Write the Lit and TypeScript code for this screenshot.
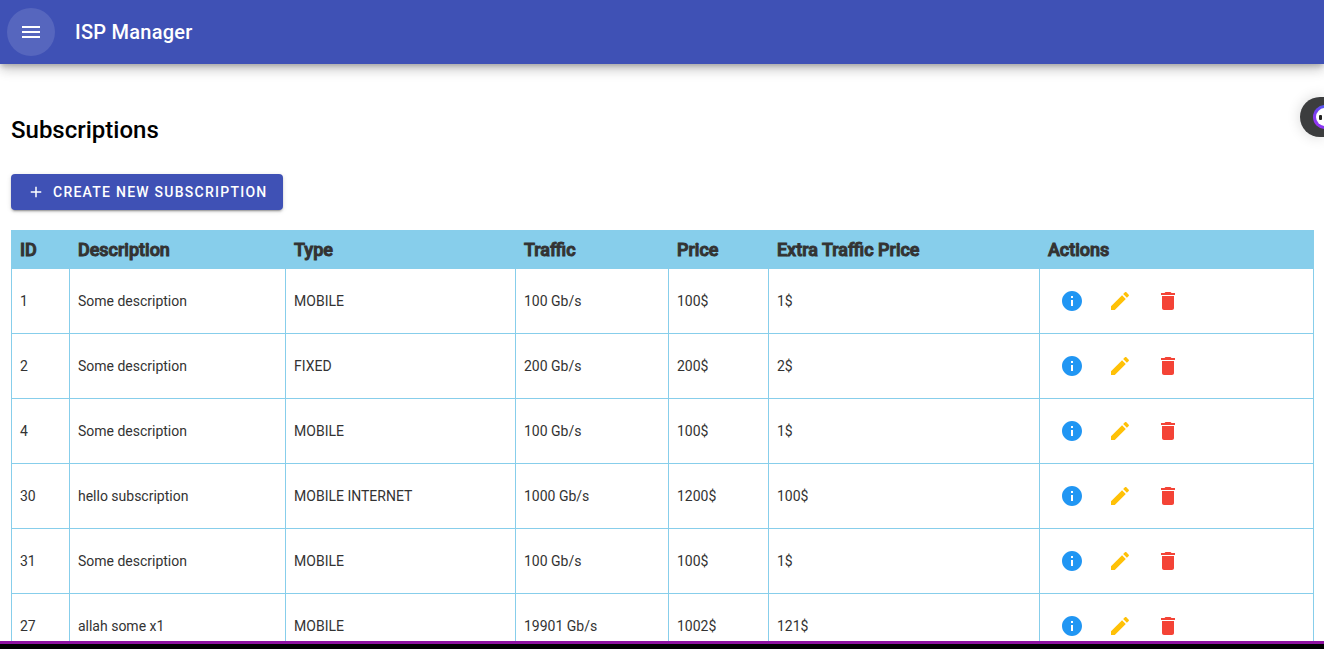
import { LitElement, html, css, svg } from "lit";
import { customElement, state } from "lit/decorators.js";

interface Subscription {
  id: number;
  description: string;
  type: string;
  traffic: number;
  price: number;
  extraPrice: number;
}

const PATHS = {
  menu: "M3 18h18v-2H3v2zm0-5h18v-2H3v2zm0-7v2h18V6H3z",
  add: "M19 13h-6v6h-2v-6H5v-2h6V5h2v6h6v2z",
  info: "M12 2C6.48 2 2 6.48 2 12s4.48 10 10 10 10-4.48 10-10S17.52 2 12 2zm1 15h-2v-6h2v6zm0-8h-2V7h2v2z",
  edit: "M3 17.25V21h3.75L17.81 9.94l-3.75-3.75L3 17.25zM20.71 7.04c.39-.39.39-1.02 0-1.41l-2.34-2.34c-.39-.39-1.02-.39-1.41 0l-1.83 1.83 3.75 3.75 1.83-1.83z",
  delete: "M6 19c0 1.1.9 2 2 2h8c1.1 0 2-.9 2-2V7H6v12zM19 4h-3.5l-1-1h-5l-1 1H5v2h14V4z",
};

const icon = (name: keyof typeof PATHS, size = 24) => html`
  <svg width=${size} height=${size} viewBox="0 0 24 24" aria-hidden="true">
    ${svg`<path fill="currentColor" d=${PATHS[name]}></path>`}
  </svg>
`;

@customElement("app-bar")
export class AppBar extends LitElement {
  static styles = css`
    :host {
      display: block;
      position: relative;
      z-index: 1;
    }
    .bar {
      display: flex;
      align-items: center;
      gap: 20px;
      height: 64px;
      padding: 0 7px;
      background: #3f51b5;
      color: #fff;
      box-shadow: 0 3px 5px -1px rgba(0, 0, 0, 0.2),
        0 6px 10px 0 rgba(0, 0, 0, 0.14), 0 1px 18px 0 rgba(0, 0, 0, 0.12);
    }
    .menu {
      display: grid;
      place-items: center;
      width: 48px;
      height: 48px;
      padding: 0;
      border: 0;
      border-radius: 50%;
      background: rgba(255, 255, 255, 0.12);
      color: inherit;
      cursor: pointer;
    }
    .title {
      font-size: 20px;
      font-weight: 500;
      line-height: 32px;
      letter-spacing: 0.0125em;
    }
  `;

  render() {
    return html`
      <header class="bar">
        <button class="menu" aria-label="Menu">${icon("menu")}</button>
        <span class="title">ISP Manager</span>
      </header>
    `;
  }
}

@customElement("subscription-table")
export class SubscriptionTable extends LitElement {
  static properties = { rows: { attribute: false } };

  declare rows: Subscription[];

  static styles = css`
    :host {
      display: block;
    }
    .table {
      width: 100%;
      table-layout: fixed;
      border-collapse: collapse;
      color: #333;
      font-size: 14px;
      line-height: 20px;
    }
    .table th,
    .table td {
      box-sizing: border-box;
      padding: 8px;
      border: 1px solid #87ceeb;
      text-align: left;
    }
    .table th {
      background: #87ceeb;
      font-size: 18px;
      font-weight: 500;
      line-height: 21px;
      -webkit-text-stroke: 1px #333;
    }
    .id {
      width: 4.45%;
    }
    .description {
      width: 16.6%;
    }
    .type {
      width: 17.66%;
    }
    .traffic {
      width: 11.75%;
    }
    .price {
      width: 7.68%;
    }
    .extra {
      width: 20.81%;
    }
    .actions {
      display: flex;
    }
    .action {
      display: grid;
      place-items: center;
      width: 48px;
      height: 48px;
      padding: 0;
      border: 0;
      background: none;
      cursor: pointer;
    }
    .info {
      color: #2196f3;
    }
    .edit {
      color: #ffc107;
    }
    .delete {
      color: #f44336;
    }
  `;

  render() {
    return html`
      <table class="table">
        <thead>
          <tr>
            <th class="id" scope="col">ID</th>
            <th class="description" scope="col">Description</th>
            <th class="type" scope="col">Type</th>
            <th class="traffic" scope="col">Traffic</th>
            <th class="price" scope="col">Price</th>
            <th class="extra" scope="col">Extra Traffic Price</th>
            <th scope="col">Actions</th>
          </tr>
        </thead>
        <tbody>
          ${this.rows.map(
            (row) => html`
              <tr>
                <td>${row.id}</td>
                <td>${row.description}</td>
                <td>${row.type}</td>
                <td>${row.traffic} Gb/s</td>
                <td>${row.price}$</td>
                <td>${row.extraPrice}$</td>
                <td>
                  <div class="actions">
                    <button class="action info" aria-label="Details">${icon("info")}</button>
                    <button class="action edit" aria-label="Edit">${icon("edit")}</button>
                    <button class="action delete" aria-label="Delete">${icon("delete")}</button>
                  </div>
                </td>
              </tr>
            `
          )}
        </tbody>
      </table>
    `;
  }
}

@customElement("assistant-tab")
export class AssistantTab extends LitElement {
  static styles = css`
    :host {
      position: fixed;
      top: 97px;
      right: 0;
      z-index: 2;
    }
    .tab {
      display: flex;
      align-items: center;
      justify-content: flex-end;
      width: 24px;
      height: 40px;
      padding: 0;
      border: 0;
      border-radius: 20px 0 0 20px;
      background: #3c3d3e;
      box-shadow: 0 0 14px rgba(0, 0, 0, 0.16);
      cursor: pointer;
    }
  `;

  render() {
    return html`
      <button class="tab" aria-label="Assistant">
        <svg width="11" height="24" viewBox="0 0 11 24" aria-hidden="true">
          <defs>
            <linearGradient id="ring" x1="0" y1="1" x2="1" y2="0">
              <stop offset="0" stop-color="#a92bf5"></stop>
              <stop offset="0.5" stop-color="#6a45f0"></stop>
              <stop offset="1" stop-color="#3d7bff"></stop>
            </linearGradient>
          </defs>
          <circle cx="12" cy="12" r="12" fill="url(#ring)"></circle>
          <circle cx="12" cy="12" r="9" fill="#fff"></circle>
          <rect x="6" y="10" width="3" height="5" rx="1" fill="#222"></rect>
        </svg>
      </button>
    `;
  }
}

@customElement("app-root")
export class AppRoot extends LitElement {
  @state()
  private rows: Subscription[] = [
    { id: 1, description: "Some description", type: "MOBILE", traffic: 100, price: 100, extraPrice: 1 },
    { id: 2, description: "Some description", type: "FIXED", traffic: 200, price: 200, extraPrice: 2 },
    { id: 4, description: "Some description", type: "MOBILE", traffic: 100, price: 100, extraPrice: 1 },
    { id: 30, description: "hello subscription", type: "MOBILE INTERNET", traffic: 1000, price: 1200, extraPrice: 100 },
    { id: 31, description: "Some description", type: "MOBILE", traffic: 100, price: 100, extraPrice: 1 },
    { id: 27, description: "allah some x1", type: "MOBILE", traffic: 19901, price: 1002, extraPrice: 121 },
  ];

  static styles = css`
    :host {
      display: flex;
      flex-direction: column;
      height: 100vh;
      background: #fff;
      color: #000;
      font-family: Roboto, sans-serif;
      -webkit-font-smoothing: antialiased;
    }
    .content {
      flex: 1;
      min-height: 0;
      overflow: hidden;
      padding: 50px 10px 0 11px;
    }
    .heading {
      margin: 0 0 28px;
      font-size: 24px;
      font-weight: 500;
      line-height: 32px;
    }
    .create {
      display: flex;
      align-items: center;
      gap: 8px;
      height: 36px;
      margin: 0 0 20px;
      padding: 0 16px;
      border: 0;
      border-radius: 4px;
      background: #3f51b5;
      color: #fff;
      font-family: inherit;
      font-size: 14px;
      font-weight: 500;
      letter-spacing: 0.0892857em;
      text-transform: uppercase;
      box-shadow: 0 3px 1px -2px rgba(0, 0, 0, 0.2),
        0 2px 2px 0 rgba(0, 0, 0, 0.14), 0 1px 5px 0 rgba(0, 0, 0, 0.12);
      cursor: pointer;
    }
    .edge {
      height: 5px;
      border-top: 3px solid #8e12a0;
      background: #000;
    }
  `;

  render() {
    return html`
      <app-bar></app-bar>
      <main class="content">
        <h2 class="heading">Subscriptions</h2>
        <button class="create">${icon("add", 18)}<span>Create new subscription</span></button>
        <subscription-table .rows=${this.rows}></subscription-table>
      </main>
      <div class="edge"></div>
      <assistant-tab></assistant-tab>
    `;
  }
}
